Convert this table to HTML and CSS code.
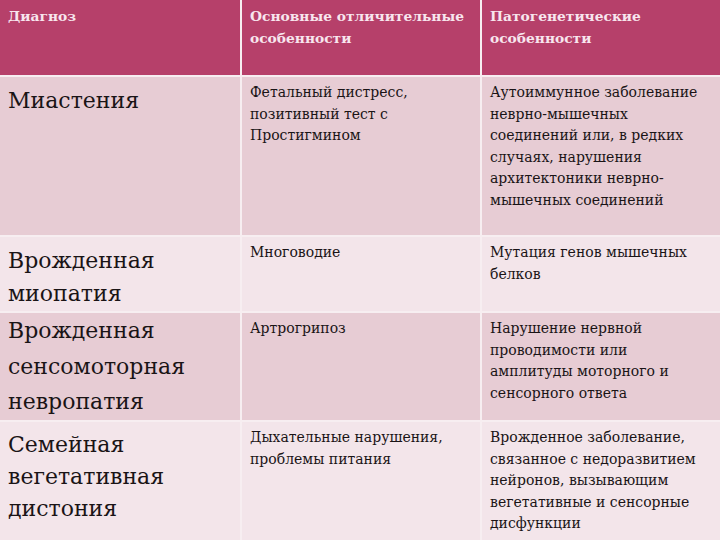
FILE: index.html
```html
<!DOCTYPE html>
<html lang="ru">
<head>
<meta charset="utf-8">
<link rel="stylesheet" href="styles.css">
</head>
<body>
<div class="table">
  <div class="cell head">Диагноз</div>
  <div class="cell head">Основные отличительные особенности</div>
  <div class="cell head">Патогенетические особенности</div>

  <div class="cell odd big">Миастения</div>
  <div class="cell odd">Фетальный дистресс, позитивный тест с Простигмином</div>
  <div class="cell odd">Аутоиммунное заболевание неврно-мышечных соединений или, в редких случаях, нарушения архитектоники неврно-мышечных соединений</div>

  <div class="cell even big">Врожденная миопатия</div>
  <div class="cell even">Многоводие</div>
  <div class="cell even">Мутация генов мышечных белков</div>

  <div class="cell odd big tight">Врожденная сенсомоторная невропатия</div>
  <div class="cell odd">Артрогрипоз</div>
  <div class="cell odd">Нарушение нервной проводимости или амплитуды моторного и сенсорного ответа</div>

  <div class="cell even big last">Семейная вегетативная дистония</div>
  <div class="cell even">Дыхательные нарушения, проблемы питания</div>
  <div class="cell even">Врожденное заболевание, связанное с недоразвитием нейронов, вызывающим вегетативные и сенсорные дисфункции</div>
</div>
</body>
</html>
```
FILE: styles.css
```css
html, body {
  margin: 0;
  padding: 0;
  width: 720px;
  height: 540px;
  overflow: hidden;
  background: #ffffff;
}

.table {
  display: grid;
  grid-template-columns: 240px 238px 238px;
  grid-template-rows: 75px 158px 74px 107px 118px;
  gap: 2px;
  background: #f7eef1;
  width: 720px;
  height: 540px;
  font-family: "DejaVu Serif", serif;
  color: #1a1416;
}

.cell {
  padding: 5px 8px 0 8px;
  font-family: "DejaVu Serif", serif;
  font-size: 14px;
  line-height: 21.6px;
}

.head {
  background: #b6406a;
  color: #f8e6ee;
  font-weight: bold;
  font-size: 13.8px;
  line-height: 22px;
  padding-top: 5px;
}

.odd {
  background: #e7ccd4;
}

.even {
  background: #f3e5ea;
}

.big {
  font-size: 22px;
  line-height: 33px;
  padding-top: 7px;
}

.tight {
  line-height: 35.5px;
  padding-top: 0;
}

.last {
  line-height: 32px;
}
```
